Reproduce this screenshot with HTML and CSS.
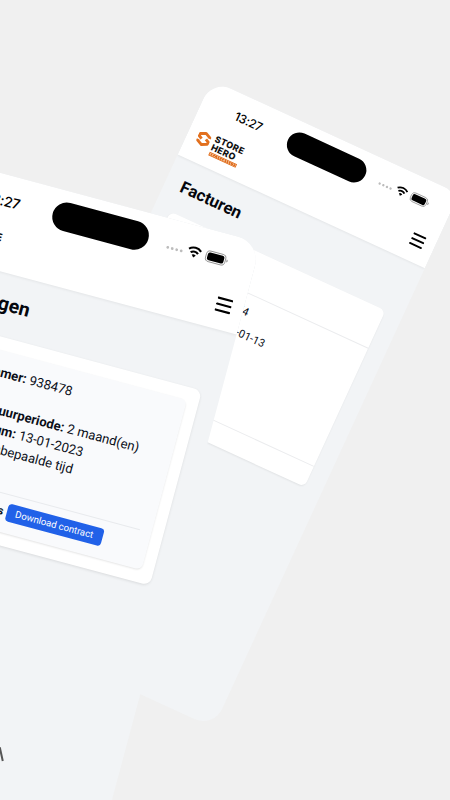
FILE: index.html
```html
<!DOCTYPE html>
<html lang="nl">
<head>
<meta charset="utf-8">
<title>Store Hero</title>
<link rel="stylesheet" href="styles.css">
</head>
<body>
<svg width="0" height="0" class="defs">
  <symbol id="status" viewBox="0 0 56 16">
    <g fill="#bcbcbc"><circle cx="1.6" cy="10" r="1.2"/><circle cx="5.6" cy="10" r="1.2"/><circle cx="9.6" cy="10" r="1.2"/><circle cx="13.6" cy="10" r="1.2"/></g>
    <g fill="none" stroke="#000" stroke-width="1.8"><path d="M19.6 6.3a8 8 0 0 1 10.8 0"/><path d="M21.7 8.9a4.9 4.9 0 0 1 6.6 0"/></g>
    <path d="M23.2 10.7a2.7 2.7 0 0 1 3.6 0L25 12.7z"/>
    <rect x="35.3" y="3.5" width="17.2" height="9.4" rx="3.2" fill="none" stroke="#858585" stroke-width=".7"/>
    <rect x="36.6" y="4.8" width="14.6" height="6.8" rx="1.8"/>
    <path d="M53.5 6.8v2.8q1.2-.4 1.2-1.4t-1.2-1.4" fill="#999"/>
  </symbol>
  <symbol id="burger" viewBox="0 0 14 14"><path d="M.9 1.7h12.2M.9 7h12.2M.9 12.3h12.2" stroke="#000" stroke-width="1.9" stroke-linecap="round"/></symbol>
  <symbol id="mark" viewBox="0 0 15 16"><g fill="none" stroke="#e2701f" stroke-width="3" stroke-linejoin="round"><path d="M12.6 5.6V4.3L7.2 1.7 1.9 4.3v2.6L5.2 8.6"/><path d="M2.2 10.4v1.3l5.4 2.6 5.3-2.6V9.1L9.6 7.4"/></g></symbol>
</svg>
<main class="stage">
  <section class="phone back">
    <header class="top">
      <div class="status"><span class="time">13:27</span><span class="island"></span><svg class="signals"><use href="#status"/></svg></div>
      <div class="nav">
        <svg class="mark"><use href="#mark"/></svg>
        <div class="brand"><b>STORE</b><b>HERO</b><i class="tag"></i></div>
        <svg class="burger"><use href="#burger"/></svg>
      </div>
    </header>
    <h1>Facturen</h1>
    <article class="invoice">
      <div class="invoice-head"></div>
      <div class="invoice-body"><p class="number">2023054</p><p class="date">2023-01-13</p></div>
      <div class="invoice-foot"></div>
    </article>
  </section>
  <section class="phone front">
    <header class="top">
      <div class="status"><span class="time">13:27</span><span class="island"></span><svg class="signals"><use href="#status"/></svg></div>
      <div class="nav">
        <svg class="mark"><use href="#mark"/></svg>
        <div class="brand"><b>STORE</b><b>HERO</b><i class="tag"></i></div>
        <svg class="burger"><use href="#burger"/></svg>
      </div>
    </header>
    <h1>Boekingen</h1>
    <article class="booking">
      <div class="details">
        <p class="row r1"><b>Nummer:</b> 938478</p>
        <p class="row r2"><b>Huurperiode:</b> 2 maand(en)</p>
        <p class="row r3"><b>Datum:</b> 13-01-2023</p>
        <p class="row r4">Onbepaalde tijd</p>
        <div class="actions"><b>Acties</b><a class="button">Download contract</a></div>
      </div>
    </article>
    <svg class="stroke" viewBox="0 0 10 16"><path d="M1 1l6.5 12.5" stroke="#555" stroke-width="2"/></svg>
  </section>
</main>
</body>
</html>
```
FILE: styles.css
```css
* { box-sizing: border-box; }
body { margin: 0; background: #f0f0f0; font-family: Roboto, sans-serif; color: #0b0f19; }
.defs { position: absolute; }
.stage { position: relative; width: 450px; height: 800px; overflow: hidden; background: #f0f0f0; }
.phone { position: absolute; transform-origin: 0 0; background: #f2f4f6; overflow: hidden; border-radius: 2.1em; }
.back { left: 212.3px; top: 80.4px; width: 271.6px; height: 588px; font-size: 10px; transform: rotate(24.7deg); border-top-right-radius: 1.6em; }
.front { left: -43.9px; top: 160.5px; width: 316px; height: 684px; font-size: 11.6px; transform: rotate(15deg); }

.top { height: 8.2em; background: #fff; box-shadow: 0 .1em .25em rgba(0,0,0,.06); }
.status { display: grid; grid-template-columns: 1fr 8.5em 1fr; align-items: center; height: 4.42em; }
.back .status { padding-left: 1px; }
.front .status { padding-right: 3px; }
.time { font-family: Inter, sans-serif; font-weight: 500; color: #000; }
.time { font-size: 1.2em; padding-left: 2.92em; letter-spacing: -.02em; }
.front .time { padding-left: 2.8em; }
.island { height: 2.5em; border-radius: 1.25em; background: #000; }
.signals { width: 5.6em; height: 1.6em; margin-left: 1.55em; }
.front .signals { margin: .1em 0 0 1.65em; }
.nav { display: flex; height: 3.78em; padding: .5em 1.05em 0 1em; }
.mark { width: 1.45em; height: 1.6em; }
.brand { margin: -.1em 0 0 .3em; display: flex; flex-direction: column; font-family: Inter, sans-serif; color: #111; }
.brand b { font-size: .9em; line-height: .93em; font-weight: 800; letter-spacing: .03em; }
.tag { width: 3em; height: .42em; margin-top: .1em; background: repeating-linear-gradient(90deg, #f3b27f 0 .1em, #dc6a1c .1em .25em); border: .1em solid #e2701f; }
.burger { width: 1.4em; height: 1.4em; margin: .4em 0 0 auto; }
.front .brand { margin: .1em 0 0 -.02em; }
.front .burger { margin-right: 0; margin-top: .4em; }

h1 { margin: 1.05em 0 0 .98em; font-size: 1.67em; line-height: 1.2em; font-weight: 700; color: #05070d; }

.invoice { width: 237px; height: 193.5px; margin: 17.5px 0 0 17px; background: #fff; border-radius: 6px; box-shadow: 0 1px 2px rgba(0,0,0,.07); }
.invoice-head { height: 42px; border-bottom: 1px solid #ebecee; }
.invoice-body { height: 130px; padding-top: 6.5px; border-bottom: 1px solid #ebecee; font-size: 11px; line-height: 22px; text-align: right; }
.invoice p { margin: 0; }
.number { padding-right: 123.5px; }
.date { padding-right: 96px; }

.front h1 { width: 91px; margin-top: 1em; margin-bottom: -.1em; direction: rtl; white-space: nowrap; }
.booking { width: 278px; height: 201.5px; margin: 22.5px 0 0 18.5px; padding: 13px 11.5px; background: #fff; border-radius: 8px; box-shadow: 0 1px 3px rgba(0,0,0,.1); }
.details { height: 175.5px; padding-top: 12px; background: #f9fafc; border-radius: 6px; box-shadow: 0 1px 2px rgba(0,0,0,.11); }
.row { margin: 0; font-size: 13.1px; line-height: 19px; text-align: right; white-space: nowrap; }
.row b { font-weight: 700; }
.r1 { padding-right: 113px; margin-bottom: 17.5px; }
.r2 { padding-right: 34px; }
.r3 { padding-right: 87px; }
.r4 { padding-right: 92.5px; }
.actions { display: flex; justify-content: flex-end; align-items: center; gap: 3px; margin: 31px 12.5px 0; padding: 8px 34px 0 0; border-top: 1px solid #e8eaed; font-size: 11.5px; }
.button { width: 99px; height: 18px; border-radius: 3.5px; background: #2161e8; color: #fff; font-size: 9.6px; font-weight: 400; line-height: 17px; text-align: center; white-space: nowrap; }
.stroke { display: block; width: 10px; height: 16px; margin: 194px 0 0 192.5px; }
```
